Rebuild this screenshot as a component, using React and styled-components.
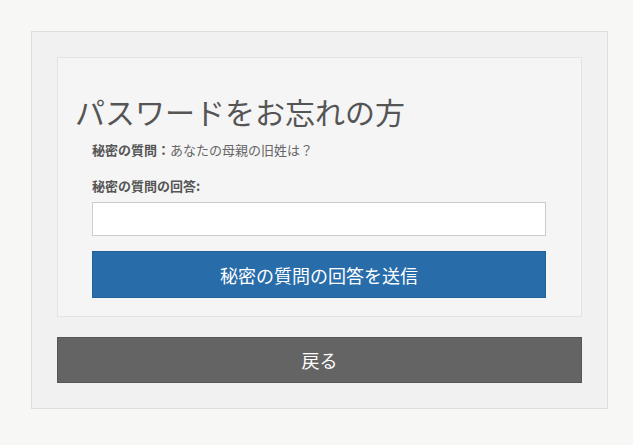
import styled, { createGlobalStyle } from 'styled-components';

const GlobalStyle = createGlobalStyle`
  body {
    margin: 0;
    background: #f7f8f6;
    font-family: "Noto Sans CJK JP", "Noto Sans", sans-serif;
  }
`;

const Outer = styled.div`
  box-sizing: border-box;
  width: 577px;
  margin: 31px 0 0 31px;
  padding: 25px;
  background: #f1f1f1;
  border: 1px solid #dedede;
`;

const Card = styled.div`
  box-sizing: border-box;
  background: #f5f5f5;
  border: 1px solid #e3e3e3;
  padding: 34px 35px 18px 34px;
`;

const Title = styled.h1`
  margin: 0 0 0 -17px;
  font-size: 30px;
  line-height: 38px;
  font-weight: 400;
  color: #555;
`;

const Question = styled.p`
  margin: 10px 0 0;
  font-size: 13px;
  line-height: 20px;
  color: #666;
`;

const Label = styled.label`
  display: block;
  margin-top: 16px;
  font-size: 13px;
  line-height: 20px;
  font-weight: 700;
  color: #555;
`;

const Strong = styled.b`
  color: #555;
`;

const Input = styled.input`
  display: block;
  box-sizing: border-box;
  width: 100%;
  height: 34px;
  margin-top: 6px;
  border: 1px solid #cccccc;
  background: #fff;
  outline: none;
`;

const Button = styled.button`
  display: block;
  box-sizing: border-box;
  width: 100%;
  height: ${(p) => p.$h}px;
  margin-top: ${(p) => p.$mt}px;
  border: 1px solid ${(p) => p.$border};
  background: ${(p) => p.$bg};
  color: #fff;
  font-family: inherit;
  font-size: 18px;
  cursor: pointer;
`;

export default function App() {
  return (
    <>
      <GlobalStyle />
      <Outer>
        <Card>
          <Title>パスワードをお忘れの方</Title>
          <Question>
            <Strong>秘密の質問：</Strong>あなたの母親の旧姓は？
          </Question>
          <Label htmlFor="answer">秘密の質問の回答:</Label>
          <Input id="answer" type="text" />
          <Button $h={47} $mt={15} $bg="#286ca9" $border="#22609a">
            秘密の質問の回答を送信
          </Button>
        </Card>
        <Button $h={46} $mt={20} $bg="#646464" $border="#555">
          戻る
        </Button>
      </Outer>
    </>
  );
}
